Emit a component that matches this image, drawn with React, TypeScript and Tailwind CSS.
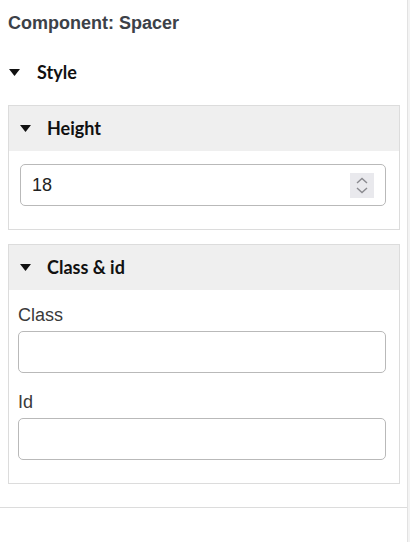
import React from "react";

function Caret() {
  return (
    <svg width="11" height="7" viewBox="0 0 11 7" className="shrink-0">
      <polygon points="0,0 11,0 5.5,7" fill="#111" />
    </svg>
  );
}

function Spinner() {
  return (
    <div className="flex h-[25px] w-[24px] flex-col items-center justify-center gap-[3px] bg-[#e9e9ed]">
      <svg width="12" height="7" viewBox="0 0 12 7">
        <polyline points="1,6 6,1.5 11,6" fill="none" stroke="#8a8a8f" strokeWidth="1.4" />
      </svg>
      <svg width="12" height="7" viewBox="0 0 12 7">
        <polyline points="1,1 6,5.5 11,1" fill="none" stroke="#8a8a8f" strokeWidth="1.4" />
      </svg>
    </div>
  );
}

function PanelHeader({ title }: { title: string }) {
  return (
    <div className="flex h-[45px] items-center gap-[16px] bg-[#efefef] pl-[11px]">
      <Caret />
      <span className="font-['Lato',sans-serif] text-[18px] font-bold text-[#111]">{title}</span>
    </div>
  );
}

export default function App() {
  return (
    <div className="flex h-[542px] w-[410px] bg-white font-['Liberation_Sans',Arial,sans-serif]">
      <div className="flex w-[408px] flex-col border-r border-[#e2e2e2]">
        <div className="pl-[8px] pt-[12px] text-[18px] font-bold leading-[22px] text-[#3c4148]">
          Component: Spacer
        </div>
        <div className="mt-[27px] flex h-[22px] items-center gap-[17px] pl-[9px]">
          <Caret />
          <span className="font-['Lato',sans-serif] text-[18px] font-bold text-[#111]">Style</span>
        </div>
        <div className="ml-[8px] mt-[22px] w-[392px] border border-[#dcdcdc]">
          <PanelHeader title="Height" />
          <div className="pb-[23px] pl-[11px] pr-[13px] pt-[13px]">
            <div className="flex h-[42px] items-center justify-between rounded-[5px] border border-[#b9b9b9] pl-[11px] pr-[11px]">
              <span className="text-[18px] text-[#222]">18</span>
              <Spinner />
            </div>
          </div>
        </div>
        <div className="ml-[8px] mt-[14px] w-[392px] border border-[#dcdcdc]">
          <PanelHeader title="Class & id" />
          <div className="pb-[23px] pl-[9px] pr-[13px] pt-[13px]">
            <div className="text-[18px] leading-[24px] text-[#3a3a3a]">Class</div>
            <div className="mt-[4px] h-[42px] rounded-[5px] border border-[#b9b9b9]" />
            <div className="mt-[17px] text-[18px] leading-[24px] text-[#3a3a3a]">Id</div>
            <div className="mt-[4px] h-[42px] rounded-[5px] border border-[#b9b9b9]" />
          </div>
        </div>
        <div className="mt-[23px] border-t border-[#dcdcdc]" />
      </div>
      <div className="flex-1 bg-[#f3f3f3]" />
    </div>
  );
}
